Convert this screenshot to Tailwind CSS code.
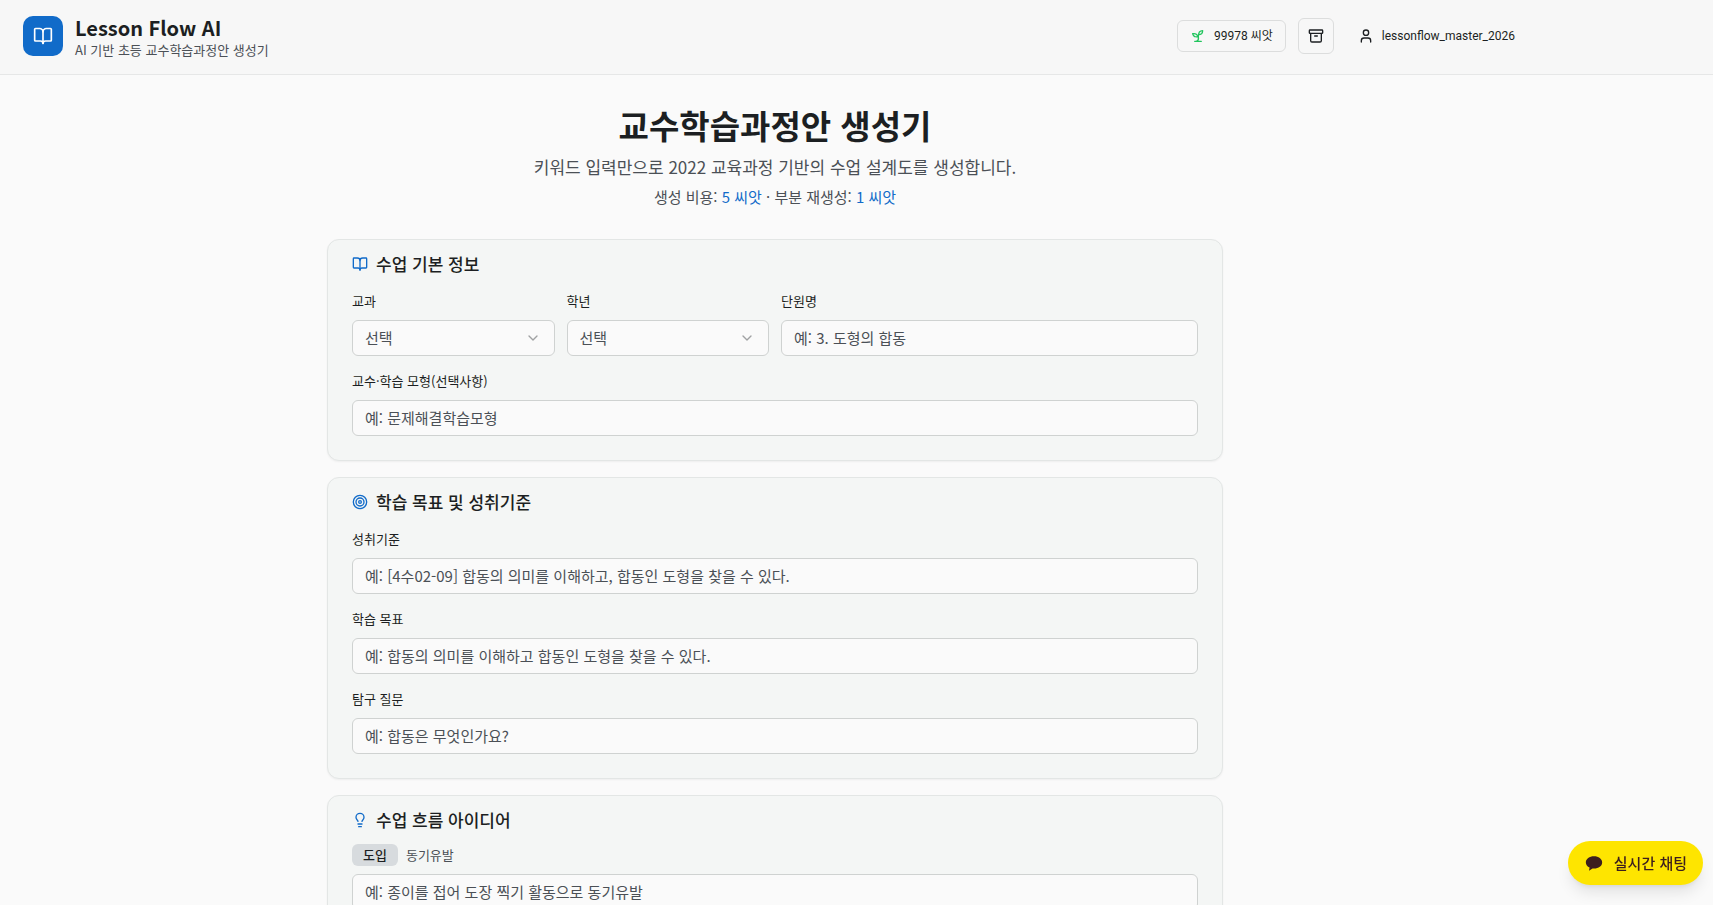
<!DOCTYPE html>
<html lang="ko">
  <head>
    <meta charset="UTF-8" />
    <meta name="viewport" content="width=device-width, initial-scale=1.0" />
    <title>Lesson Flow AI</title>
    <script src="https://cdn.jsdelivr.net/npm/@tailwindcss/browser@4"></script>
    <style>
      body {
        font-family: "Noto Sans CJK KR", sans-serif;
      }
    </style>
  </head>
  <body class="min-h-screen bg-[#fafafa] text-[#1c1f22]">
    <header class="border-b border-[#e6e7e7] bg-[#f7f7f7] pr-[186px] pl-[23px]">
      <div class="flex items-start justify-between py-4">
        <div class="flex items-start gap-3">
          <div class="flex size-10 items-center justify-center rounded-[10px] bg-[#116bc9] text-white">
            <svg class="size-5" viewBox="0 0 24 24" fill="none" stroke="currentColor" stroke-width="2" stroke-linecap="round" stroke-linejoin="round">
              <path d="M12 7v14" />
              <path d="M3 18a1 1 0 0 1-1-1V4a1 1 0 0 1 1-1h5a4 4 0 0 1 4 4 4 4 0 0 1 4-4h5a1 1 0 0 1 1 1v13a1 1 0 0 1-1 1h-6a3 3 0 0 0-3 3 3 3 0 0 0-3-3z" />
            </svg>
          </div>
          <div>
            <p class="text-xl leading-6 font-bold">Lesson Flow AI</p>
            <p class="mt-0.5 text-[13px] leading-4 text-[#4b5056]">AI 기반 초등 교수학습과정안 생성기</p>
          </div>
        </div>
        <div class="mt-0.5 flex items-center gap-3">
          <button class="flex h-8 items-center gap-2 rounded-md border border-[#dcdddd] px-3 font-[Roboto,'Noto_Sans_CJK_KR',sans-serif] text-xs">
            <svg class="size-4 text-[#22c55e]" viewBox="0 0 24 24" fill="none" stroke="currentColor" stroke-width="2" stroke-linecap="round" stroke-linejoin="round">
              <path d="M7 20h10" />
              <path d="M10 20c5.5-2.500.8-6.400 3-10" />
              <path d="M9.500 9.400c1.100.8 1.800 2.200 2.300 3.700-2 .4-3.500.4-4.800-.3-1.200-.6-2.300-1.900-3-4.200 2.800-.5 4.400 0 5.500.8z" />
              <path d="M14.100 6a7 7 0 0 0-1.100 4c1.900-.1 3.300-.6 4.300-1.400 1-1 1.600-2.300 1.700-4.600-2.700.1-4 1-4.900 2z" />
            </svg>
            99978 씨앗
          </button>
          <button class="flex size-9 items-center justify-center rounded-md border border-[#dcdddd]" aria-label="보관함">
            <svg class="size-4" viewBox="0 0 24 24" fill="none" stroke="currentColor" stroke-width="2" stroke-linecap="round" stroke-linejoin="round">
              <rect width="20" height="5" x="2" y="3" rx="1" />
              <path d="M4 8v11a2 2 0 0 0 2 2h12a2 2 0 0 0 2-2V8" />
              <path d="M10 12h4" />
            </svg>
          </button>
          <button class="flex h-9 items-center gap-2 px-3 font-[Roboto,'Noto_Sans_CJK_KR',sans-serif] text-xs">
            <svg class="size-4" viewBox="0 0 24 24" fill="none" stroke="currentColor" stroke-width="2" stroke-linecap="round" stroke-linejoin="round">
              <path d="M19 21v-2a4 4 0 0 0-4-4H9a4 4 0 0 0-4 4v2" />
              <circle cx="12" cy="7" r="4" />
            </svg>
            lessonflow_master_2026
          </button>
        </div>
      </div>
    </header>

    <main class="pt-8 pr-[163px] pb-8">
      <div class="mx-auto flex max-w-4xl flex-col gap-4">
        <section class="mb-4 text-center">
          <h1 class="text-[33px] leading-9 font-bold">교수학습과정안 생성기</h1>
          <p class="mt-3 text-[17px] leading-6 text-[#4b5056]">키워드 입력만으로 2022 교육과정 기반의 수업 설계도를 생성합니다.</p>
          <p class="mt-2 text-[15px] leading-5 text-[#4b5056]">생성 비용: <span class="text-[#116bc9]">5 씨앗</span> · 부분 재생성: <span class="text-[#116bc9]">1 씨앗</span></p>
        </section>

        <section class="rounded-xl border border-[#e3e6e5] bg-[#f4f6f5] px-6 pt-3 pb-6 shadow-xs">
          <h2 class="flex items-center gap-2 text-[17px] leading-6 font-medium">
            <svg class="size-4 text-[#116bc9]" viewBox="0 0 24 24" fill="none" stroke="currentColor" stroke-width="2" stroke-linecap="round" stroke-linejoin="round">
              <path d="M12 7v14" />
              <path d="M3 18a1 1 0 0 1-1-1V4a1 1 0 0 1 1-1h5a4 4 0 0 1 4 4 4 4 0 0 1 4-4h5a1 1 0 0 1 1 1v13a1 1 0 0 1-1 1h-6a3 3 0 0 0-3 3 3 3 0 0 0-3-3z" />
            </svg>
            수업 기본 정보
          </h2>
          <div class="mt-4 grid grid-cols-4 gap-x-3 gap-y-4">
            <div>
              <label for="subject" class="mb-2.5 block text-[13px] leading-[18px]">교과</label>
              <div class="relative">
                <select id="subject" class="h-9 w-full appearance-none rounded-md border border-[#cfd2d1] bg-[#fafafa] px-3 text-[15px] text-[#4b5056]">
                  <option>선택</option>
                </select>
                <svg class="pointer-events-none absolute top-[10px] right-3.5 size-4 opacity-40" viewBox="0 0 24 24" fill="none" stroke="currentColor" stroke-width="2" stroke-linecap="round" stroke-linejoin="round">
                  <path d="m6 9 6 6 6-6" />
                </svg>
              </div>
            </div>
            <div>
              <label for="grade" class="mb-2.5 block text-[13px] leading-[18px]">학년</label>
              <div class="relative">
                <select id="grade" class="h-9 w-full appearance-none rounded-md border border-[#cfd2d1] bg-[#fafafa] px-3 text-[15px] text-[#4b5056]">
                  <option>선택</option>
                </select>
                <svg class="pointer-events-none absolute top-[10px] right-3.5 size-4 opacity-40" viewBox="0 0 24 24" fill="none" stroke="currentColor" stroke-width="2" stroke-linecap="round" stroke-linejoin="round">
                  <path d="m6 9 6 6 6-6" />
                </svg>
              </div>
            </div>
            <div class="col-span-2">
              <label for="unit" class="mb-2.5 block text-[13px] leading-[18px]">단원명</label>
              <input id="unit" type="text" placeholder="예: 3. 도형의 합동" class="block h-9 w-full rounded-md border border-[#cfd2d1] bg-[#fafafa] px-3 pb-0.5 text-[15px] placeholder:text-[#4b5056]" />
            </div>
            <div class="col-span-4">
              <label for="model" class="mb-2.5 block text-[13px] leading-[18px]">교수·학습 모형(선택사항)</label>
              <input id="model" type="text" placeholder="예: 문제해결학습모형" class="block h-9 w-full rounded-md border border-[#cfd2d1] bg-[#fafafa] px-3 pb-0.5 text-[15px] placeholder:text-[#4b5056]" />
            </div>
          </div>
        </section>

        <section class="rounded-xl border border-[#e3e6e5] bg-[#f4f6f5] px-6 pt-3 pb-6 shadow-xs">
          <h2 class="flex items-center gap-2 text-[17px] leading-6 font-medium">
            <svg class="size-4 text-[#116bc9]" viewBox="0 0 24 24" fill="none" stroke="currentColor" stroke-width="2" stroke-linecap="round" stroke-linejoin="round">
              <circle cx="12" cy="12" r="10" />
              <circle cx="12" cy="12" r="6" />
              <circle cx="12" cy="12" r="2" />
            </svg>
            학습 목표 및 성취기준
          </h2>
          <div class="mt-4 flex flex-col gap-4">
            <div>
              <label for="standard" class="mb-2.5 block text-[13px] leading-[18px]">성취기준</label>
              <input id="standard" type="text" placeholder="예: [4수02-09] 합동의 의미를 이해하고, 합동인 도형을 찾을 수 있다." class="block h-9 w-full rounded-md border border-[#cfd2d1] bg-[#fafafa] px-3 pb-0.5 text-[15px] placeholder:text-[#4b5056]" />
            </div>
            <div>
              <label for="goal" class="mb-2.5 block text-[13px] leading-[18px]">학습 목표</label>
              <input id="goal" type="text" placeholder="예: 합동의 의미를 이해하고 합동인 도형을 찾을 수 있다." class="block h-9 w-full rounded-md border border-[#cfd2d1] bg-[#fafafa] px-3 pb-0.5 text-[15px] placeholder:text-[#4b5056]" />
            </div>
            <div>
              <label for="question" class="mb-2.5 block text-[13px] leading-[18px]">탐구 질문</label>
              <input id="question" type="text" placeholder="예: 합동은 무엇인가요?" class="block h-9 w-full rounded-md border border-[#cfd2d1] bg-[#fafafa] px-3 pb-0.5 text-[15px] placeholder:text-[#4b5056]" />
            </div>
          </div>
        </section>

        <section class="rounded-xl border border-[#e3e6e5] bg-[#f4f6f5] px-6 pt-3 pb-6 shadow-xs">
          <h2 class="flex items-center gap-2 text-[17px] leading-6 font-medium">
            <svg class="size-4 text-[#116bc9]" viewBox="0 0 24 24" fill="none" stroke="currentColor" stroke-width="2" stroke-linecap="round" stroke-linejoin="round">
              <path d="M15 14c.2-1 .7-1.700 1.500-2.500 1-.9 1.500-2.200 1.500-3.500A6 6 0 0 0 6 8c0 1 .2 2.200 1.500 3.500.7.7 1.300 1.500 1.500 2.500" />
              <path d="M9 18h6" />
              <path d="M10 22h4" />
            </svg>
            수업 흐름 아이디어
          </h2>
          <div class="mt-3">
            <label for="intro" class="mb-2 flex items-center gap-2 text-[13px] text-[#4b5056]">
              <span class="flex h-[22px] items-center rounded-md bg-[#d7dbde] px-[11px] font-medium text-[#1c1f22]">도입</span>
              동기유발
            </label>
            <input id="intro" type="text" placeholder="예: 종이를 접어 도장 찍기 활동으로 동기유발" class="block h-9 w-full rounded-md border border-[#cfd2d1] bg-[#fafafa] px-3 pb-0.5 text-[15px] placeholder:text-[#4b5056]" />
          </div>
        </section>
      </div>
    </main>

    <button class="fixed right-[10px] bottom-5 flex h-11 items-center gap-[10px] rounded-full bg-[#fee500] px-4 text-[15px] font-medium text-[#3c1e1e] shadow-lg">
      <svg class="size-5" viewBox="0 0 24 24" fill="currentColor">
        <path d="M12 4C6.500 4 2.200 7.200 2.200 11.300c0 2.700 1.800 4.900 4.500 6.200L6 21.200l4.200-2.700c.6.1 1.200.1 1.800.1 5.500 0 9.800-3.200 9.800-7.300S17.500 4 12 4z" />
      </svg>
      실시간 채팅
    </button>
  </body>
</html>
